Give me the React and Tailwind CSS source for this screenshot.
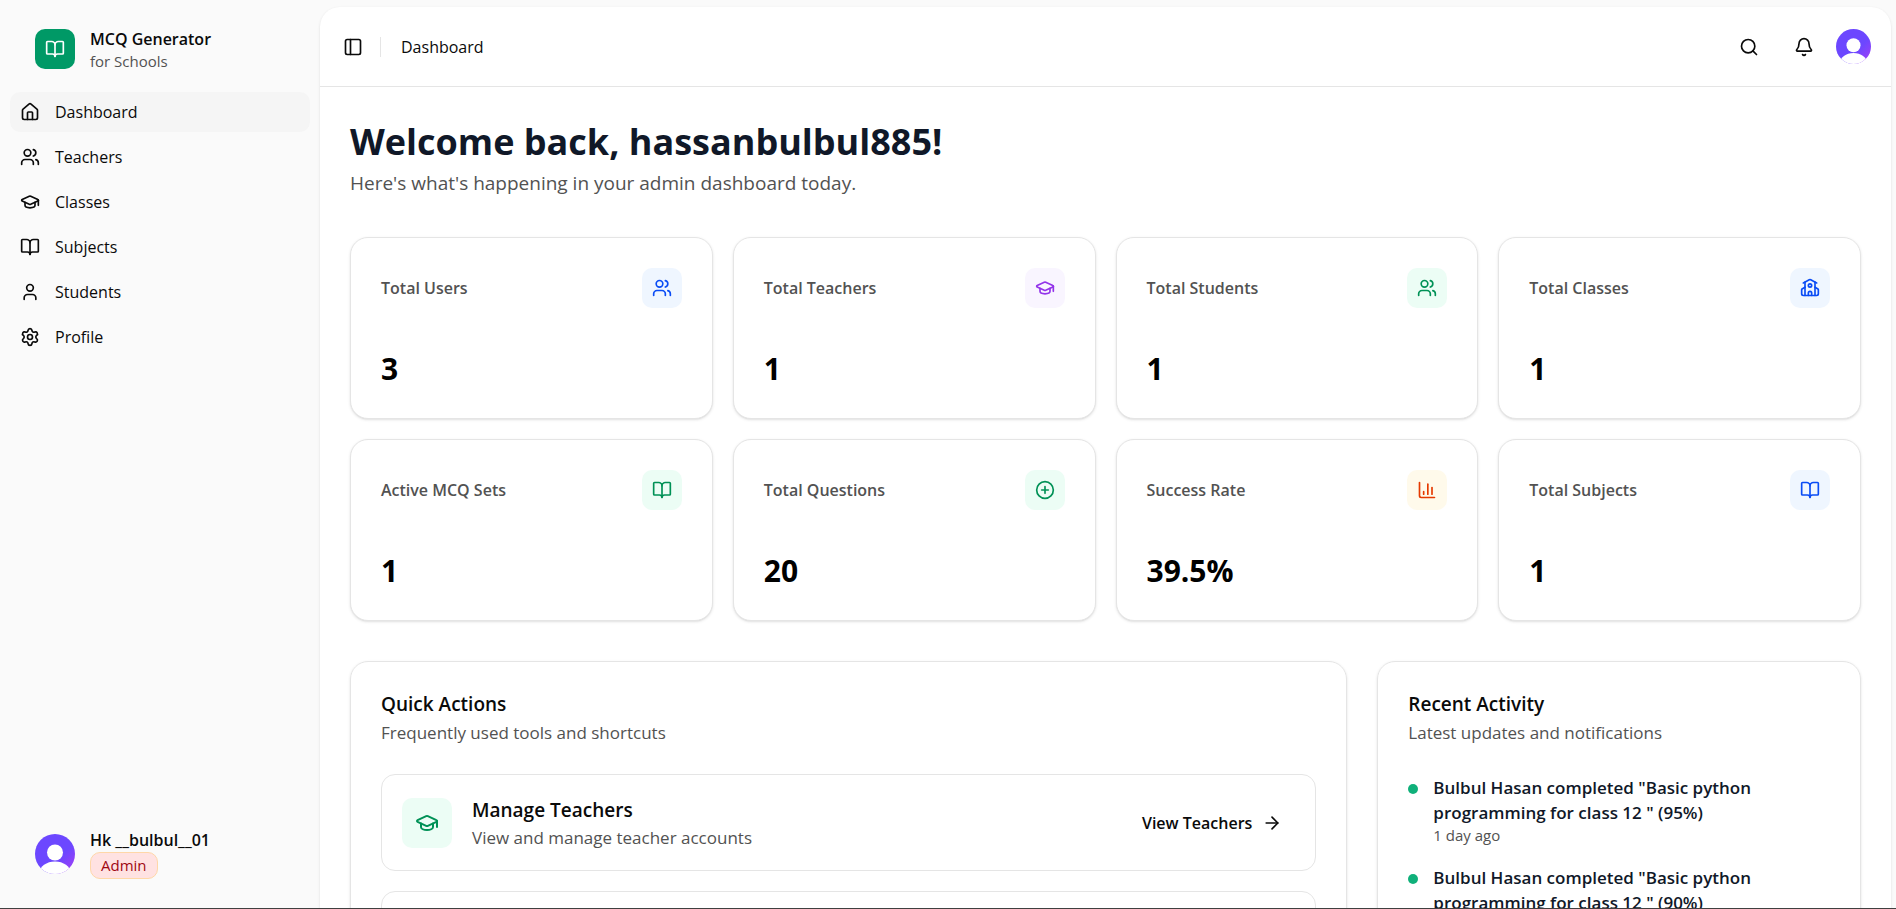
import {
  ArrowRight,
  Bell,
  BookOpen,
  ChartColumn,
  CirclePlus,
  GraduationCap,
  PanelLeft,
  School,
  Search,
  Settings,
  House,
  User,
  Users,
} from "lucide-react";

const navItems = [
  { label: "Dashboard", icon: House, active: true },
  { label: "Teachers", icon: Users },
  { label: "Classes", icon: GraduationCap },
  { label: "Subjects", icon: BookOpen },
  { label: "Students", icon: User },
  { label: "Profile", icon: Settings },
];

const colors = {
  blue: "bg-blue-50 text-[#0a4cf5]",
  purple: "bg-[#f9f5ff] text-[#9333ea]",
  green: "bg-emerald-50 text-[#009156]",
  amber: "bg-[#fffaeb] text-[#e53a00]",
};

const stats = [
  { label: "Total Users", value: "3", icon: Users, color: "blue" },
  { label: "Total Teachers", value: "1", icon: GraduationCap, color: "purple" },
  { label: "Total Students", value: "1", icon: Users, color: "green" },
  { label: "Total Classes", value: "1", icon: School, color: "blue" },
  { label: "Active MCQ Sets", value: "1", icon: BookOpen, color: "green" },
  { label: "Total Questions", value: "20", icon: CirclePlus, color: "green" },
  { label: "Success Rate", value: "39.5%", icon: ChartColumn, color: "amber" },
  { label: "Total Subjects", value: "1", icon: BookOpen, color: "blue" },
];

const actions = [
  { title: "Manage Teachers", text: "View and manage teacher accounts", cta: "View Teachers", icon: GraduationCap },
  { title: "Manage Classes", text: "View and manage classes", cta: "View Classes", icon: School },
];

const activity = [
  { text: 'Bulbul Hasan completed "Basic python programming for class 12 " (95%)', time: "1 day ago" },
  { text: 'Bulbul Hasan completed "Basic python programming for class 12 " (90%)', time: "1 day ago" },
];

function Avatar({ id, className }) {
  return (
    <svg viewBox="0 0 40 40" className={className} role="img" aria-label="User avatar">
      <defs>
        <clipPath id={`${id}-clip`}>
          <circle cx="20" cy="20" r="20" />
        </clipPath>
        <linearGradient id={`${id}-fill`} x1="0" y1="0" x2="1" y2="1">
          <stop offset="0.6" stopColor="#6c47ff" />
          <stop offset="1" stopColor="#a93df5" />
        </linearGradient>
      </defs>
      <g clipPath={`url(#${id}-clip)`}>
        <rect width="40" height="40" fill={`url(#${id}-fill)`} />
        <circle cx="20" cy="18.5" r="8" fill="#fff" />
        <ellipse cx="20" cy="39" rx="15.5" ry="11.5" fill="#fff" />
      </g>
    </svg>
  );
}

function StatCard({ label, value, icon: Icon, color }) {
  return (
    <div className="flex flex-col gap-[42px] rounded-[18px] border border-neutral-200 bg-white p-[30px] shadow-sm">
      <div className="flex items-center justify-between">
        <h3 className="text-[16px] font-semibold leading-6 text-neutral-600">{label}</h3>
        <div className={`flex size-10 items-center justify-center rounded-[10px] ${colors[color]}`}>
          <Icon size={20} />
        </div>
      </div>
      <p className="text-[30px] font-bold leading-[38px] text-black">{value}</p>
    </div>
  );
}

export default function App() {
  return (
    <div className="flex h-screen overflow-hidden border-b border-neutral-700 bg-neutral-50 font-['Open_Sans',sans-serif] text-neutral-950">
      {/* Sidebar */}
      <aside className="flex w-80 shrink-0 flex-col justify-between px-[10px] pt-[27px] pb-[29px]">
        <div>
          <div className="mb-[21px] flex items-center gap-[15px] px-[25px]">
            <div className="flex size-10 items-center justify-center rounded-[10px] bg-emerald-600 text-white">
              <BookOpen size={20} />
            </div>
            <div>
              <p className="text-[16px] font-semibold leading-6">MCQ Generator</p>
              <p className="text-[15px] leading-5 text-neutral-600">for Schools</p>
            </div>
          </div>
          <nav className="flex flex-col gap-[5px]">
            {navItems.map(({ label, icon: Icon, active }) => (
              <a
                key={label}
                href="#"
                className={`flex h-10 items-center gap-[15px] rounded-[10px] px-[10px] text-[16px] ${
                  active ? "bg-neutral-100" : ""
                }`}
              >
                <Icon size={20} />
                {label}
              </a>
            ))}
          </nav>
        </div>

        <div className="flex items-center gap-[15px] px-[25px]">
          <Avatar id="sidebar-avatar" className="size-10" />
          <div>
            <p className="text-[16px] font-semibold leading-6">Hk __bulbul__01</p>
            <span className="inline-flex h-[27px] items-center rounded-[10px] border border-orange-200 bg-red-100 px-[10px] text-[15px] font-medium text-red-800">
              Admin
            </span>
          </div>
        </div>
      </aside>

      {/* Main panel */}
      <main className="mt-[7px] mr-[5px] flex min-w-0 flex-1 flex-col overflow-hidden rounded-t-[20px] bg-white shadow-sm">
        <header className="flex h-20 shrink-0 items-center justify-between border-b border-neutral-200 pr-5 pl-[23px]">
          <div className="flex items-center">
            <button type="button" aria-label="Toggle sidebar">
              <PanelLeft size={20} />
            </button>
            <div className="mr-5 ml-[17px] h-5 w-px bg-neutral-200" />
            <span className="text-[16px]">Dashboard</span>
          </div>
          <div className="flex items-center">
            <button type="button" aria-label="Search" className="mr-[35px]">
              <Search size={20} />
            </button>
            <button type="button" aria-label="Notifications" className="mr-[22px]">
              <Bell size={20} />
            </button>
            <button type="button" aria-label="Account">
              <Avatar id="header-avatar" className="size-[35px]" />
            </button>
          </div>
        </header>

        <div className="flex-1 overflow-hidden p-[30px]">
          <h1 className="text-[36px] font-bold leading-[50px] text-gray-900">Welcome back, hassanbulbul885!</h1>
          <p className="mt-[2px] text-[19px] leading-7 text-neutral-600">
            Here's what's happening in your admin dashboard today.
          </p>

          <section className="mt-10 grid grid-cols-4 gap-5">
            {stats.map((stat) => (
              <StatCard key={stat.label} {...stat} />
            ))}
          </section>

          <div className="mt-10 grid grid-cols-3 gap-[30px]">
            <section className="col-span-2 rounded-[18px] border border-neutral-200 p-[30px] shadow-sm">
              <h2 className="text-[19px] font-semibold leading-6">Quick Actions</h2>
              <p className="text-[17px] leading-[34px] text-neutral-600">Frequently used tools and shortcuts</p>
              <div className="mt-6 flex flex-col gap-5">
                {actions.map(({ title, text, cta, icon: Icon }) => (
                  <div key={title} className="flex items-center gap-5 rounded-[14px] border border-neutral-200 p-5">
                    <div className="flex size-[50px] items-center justify-center rounded-[10px] bg-emerald-50 text-[#009156]">
                      <Icon size={24} />
                    </div>
                    <div className="flex-1">
                      <h3 className="text-[19px] font-semibold leading-[30px]">{title}</h3>
                      <p className="text-[17px] leading-[25px] text-neutral-600">{text}</p>
                    </div>
                    <a href="#" className="flex items-center gap-[10px] px-[13px] text-[16px] font-semibold">
                      {cta}
                      <ArrowRight size={20} />
                    </a>
                  </div>
                ))}
              </div>
            </section>

            <section className="rounded-[18px] border border-neutral-200 p-[30px] shadow-sm">
              <h2 className="text-[19px] font-semibold leading-6">Recent Activity</h2>
              <p className="text-[17px] leading-[34px] text-neutral-600">Latest updates and notifications</p>
              <ul className="mt-[25px] flex flex-col gap-5">
                {activity.map(({ text, time }) => (
                  <li key={text} className="flex items-start gap-[15px]">
                    <span className="mt-[9px] size-[10px] shrink-0 rounded-full bg-[#10b07a]" />
                    <div>
                      <p className="text-[17px] font-semibold leading-[25px] text-gray-900">{text}</p>
                      <p className="text-[15px] leading-5 text-neutral-600">{time}</p>
                    </div>
                  </li>
                ))}
              </ul>
            </section>
          </div>
        </div>
      </main>
    </div>
  );
}
